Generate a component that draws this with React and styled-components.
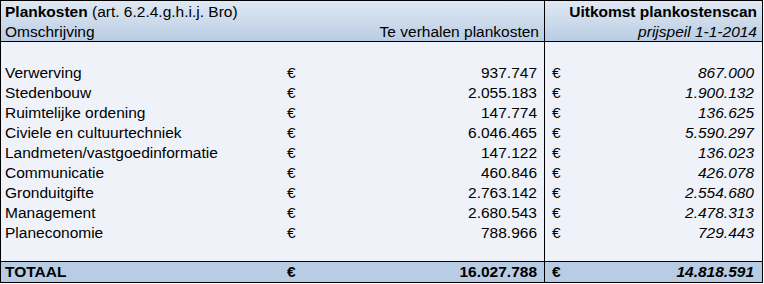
import React from 'react';
import styled, { createGlobalStyle } from 'styled-components';

const GlobalStyle = createGlobalStyle`
  body {
    margin: 0;
    background: #ffffff;
    font-family: "Liberation Sans", Arial, sans-serif;
    color: #000000;
  }
`;

const Sheet = styled.div`
  width: 763px;
  border: 1px solid #000000;
  box-sizing: border-box;
  font-size: 15.5px;
`;

const Header = styled.div`
  background: linear-gradient(to bottom, #dfe8f3 0%, #c9d8ea 60%, #b8cce4 100%);
  border-bottom: 1px solid #000000;
`;

const Body = styled.div`
  background: #eff3f9;
  border-bottom: 1px solid #000000;
`;

const Row = styled.div`
  display: flex;
  height: ${p => p.$height || 20}px;
  background: ${p => (p.$total ? '#b8cce4' : 'transparent')};
  font-weight: ${p => (p.$total ? 'bold' : 'normal')};
`;

const Left = styled.div`
  width: 543px;
  border-right: 1px solid #000000;
  display: flex;
  align-items: flex-start;
`;

const Right = styled.div`
  flex: 1;
  display: flex;
  align-items: flex-start;
`;

const Cell = styled.div`
  padding-top: ${p => (p.$total ? '0' : '1px')};
  line-height: 19px;
  white-space: nowrap;
`;

const Label = styled(Cell)`
  width: 282px;
  padding-left: 4px;
`;

const Euro = styled(Cell)`
  width: 24px;
  padding-left: ${p => (p.$right ? '7px' : '0')};
`;

const Amount = styled(Cell)`
  flex: 1;
  text-align: right;
  padding-right: ${p => (p.$right ? '8px' : '7px')};
  font-style: ${p => (p.$right ? 'italic' : 'normal')};
`;

const HeadText = styled(Cell)`
  flex: 1;
  padding-left: ${p => (p.$align === 'right' ? '0' : '4px')};
  padding-right: ${p => (p.$align === 'right' ? '5px' : '0')};
  text-align: ${p => p.$align || 'left'};
  font-style: ${p => (p.$italic ? 'italic' : 'normal')};
  font-weight: ${p => (p.$bold ? 'bold' : 'normal')};
`;

const Strong = styled.b`
  font-weight: bold;
`;

const rows = [
  ['Verwerving', '937.747', '867.000'],
  ['Stedenbouw', '2.055.183', '1.900.132'],
  ['Ruimtelijke ordening', '147.774', '136.625'],
  ['Civiele en cultuurtechniek', '6.046.465', '5.590.297'],
  ['Landmeten/vastgoedinformatie', '147.122', '136.023'],
  ['Communicatie', '460.846', '426.078'],
  ['Gronduitgifte', '2.763.142', '2.554.680'],
  ['Management', '2.680.543', '2.478.313'],
  ['Planeconomie', '788.966', '729.443'],
];

const App = () => {
  return (
    <>
      <GlobalStyle />
      <Sheet>
        <Header>
          <Row>
            <Left>
              <HeadText>
                <Strong>Plankosten</Strong> (art. 6.2.4.g.h.i.j. Bro)
              </HeadText>
            </Left>
            <Right>
              <HeadText $align="right" $bold>Uitkomst plankostenscan</HeadText>
            </Right>
          </Row>
          <Row>
            <Left>
              <HeadText>Omschrijving</HeadText>
              <HeadText $align="right">Te verhalen plankosten</HeadText>
            </Left>
            <Right>
              <HeadText $align="right" $italic>prijspeil 1-1-2014</HeadText>
            </Right>
          </Row>
        </Header>
        <Body>
          <Row>
            <Left />
            <Right />
          </Row>
          {rows.map(([name, cost, scan]) => (
            <Row key={name}>
              <Left>
                <Label>{name}</Label>
                <Euro>€</Euro>
                <Amount>{cost}</Amount>
              </Left>
              <Right>
                <Euro $right>€</Euro>
                <Amount $right>{scan}</Amount>
              </Right>
            </Row>
          ))}
          <Row $height={19}>
            <Left />
            <Right />
          </Row>
        </Body>
        <Row $total>
          <Left>
            <Label $total>TOTAAL</Label>
            <Euro $total>€</Euro>
            <Amount $total>16.027.788</Amount>
          </Left>
          <Right>
            <Euro $total $right>€</Euro>
            <Amount $total $right>14.818.591</Amount>
          </Right>
        </Row>
      </Sheet>
    </>
  );
};

export default App;
